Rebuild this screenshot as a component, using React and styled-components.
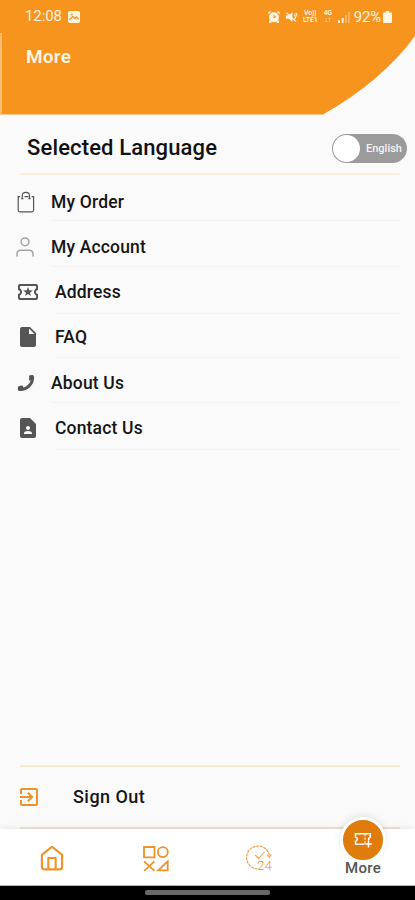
import React from 'react';
import styled, { createGlobalStyle } from 'styled-components';
import {
  MdOutlineLocalActivity,
  MdInsertDriveFile,
  MdContactPage,
  MdExitToApp,
} from 'react-icons/md';

const GlobalStyle = createGlobalStyle`
    * {
        box-sizing: border-box;
    }
    body {
        margin: 0;
        background-color: #fafafa;
        font-family: Roboto, "Liberation Sans", sans-serif;
    }
`;

const Screen = styled.div`
    width: 415px;
    height: 900px;
    display: flex;
    flex-direction: column;
    background-color: #fafafa;
    overflow: hidden;
`;

const Header = styled.header`
    position: relative;
    height: 115px;
    flex-shrink: 0;
    color: #fff5e3;
`;

const Curve = styled.svg`
    position: absolute;
    inset: 0;
`;

const StatusBar = styled.div`
    position: relative;
    display: flex;
    align-items: center;
    height: 33px;
    padding: 0 23px 0 25px;
`;

const Clock = styled.span`
    font-size: 15px;
    line-height: 33px;
    letter-spacing: -0.1px;
    margin-right: 6px;
`;

const StatusIcons = styled.div`
    display: flex;
    align-items: center;
    margin-left: auto;
`;

const Network = styled.span`
    display: flex;
    flex-direction: column;
    align-items: center;
    width: ${props => props.$width};
    margin-left: 5px;
    font-size: 7px;
    font-weight: 600;
    line-height: 7px;
    letter-spacing: -0.2px;
`;

const NetworkLine = styled.span`
    display: block;
    height: 7px;
    overflow: hidden;
`;

const Percent = styled.span`
    font-size: 15px;
    line-height: 16px;
    margin-left: 4px;
    letter-spacing: -0.2px;
`;

const PageTitle = styled.h1`
    position: relative;
    margin: 13px 0 0 26px;
    font-size: 19px;
    font-weight: 600;
    line-height: 22px;
    letter-spacing: 0.2px;
`;

const Language = styled.div`
    display: flex;
    align-items: center;
    justify-content: space-between;
    height: 58px;
    padding: 8px 8px 0 27px;
`;

const LanguageTitle = styled.h2`
    margin: 0;
    font-size: 22px;
    font-weight: 500;
    line-height: 30px;
    letter-spacing: 0.14px;
    color: #111;
`;

const Switch = styled.button`
    display: flex;
    align-items: center;
    justify-content: space-between;
    width: 75px;
    height: 29px;
    padding: 1px 5px 1px 1px;
    border: none;
    border-radius: 15px;
    background-color: #9b9b9b;
    color: #f4f4f4;
    font-family: inherit;
    font-size: 11px;
    font-weight: 500;
`;

const Knob = styled.span`
    width: 27px;
    height: 27px;
    border-radius: 50%;
    background-color: white;
`;

const Rule = styled.div`
    height: 2px;
    flex-shrink: 0;
    margin: 0 15px 0 20px;
    background-color: ${props => props.color};
`;

const Menu = styled.ul`
    margin: 0;
    padding: 0;
    list-style: none;
    flex: 1;
`;

const MenuItem = styled.li`
    display: flex;
    height: ${props => props.$height}px;
    padding: 0 15px 0 ${props => props.$left}px;
`;

const MenuIcon = styled.span`
    display: flex;
    align-items: center;
    height: 20px;
    width: ${props => props.$width}px;
    margin-top: ${props => props.$top}px;
    color: #555;
`;

const MenuLabel = styled.span`
    flex: 1;
    padding-top: ${props => props.$top}px;
    border-bottom: 1px solid #f3f3f3;
    font-size: 17.5px;
    font-weight: 500;
    line-height: 20px;
    letter-spacing: 0.17px;
    color: #161616;
`;

const SignOut = styled.div`
    display: flex;
    align-items: center;
    height: 60px;
    padding: 0 17px;
    color: #f0922a;
`;

const SignOutLabel = styled.span`
    margin: -2px 0 0 32px;
    font-size: 18px;
    font-weight: 500;
    letter-spacing: 0.45px;
    color: #161616;
`;

const Nav = styled.nav`
    display: grid;
    grid-template-columns: repeat(4, 1fr);
    height: 57px;
    flex-shrink: 0;
    background-color: white;
    border-bottom: 1px solid #b5b5b5;
    box-shadow: 0 -2px 6px rgba(0, 0, 0, 0.06);
`;

const NavItem = styled.div`
    display: flex;
    flex-direction: column;
    align-items: center;
    justify-content: ${props => (props.$active ? "flex-start" : "center")};
    padding-top: ${props => (props.$active ? "0" : "2px")};
    color: #f0922a;
`;

const NavBubble = styled.div`
    display: flex;
    align-items: center;
    justify-content: center;
    width: 46px;
    height: 46px;
    flex-shrink: 0;
    margin-top: -12px;
    border: 3px solid white;
    border-radius: 50%;
    background-color: #e07c0c;
    box-shadow: 0 -2px 7px rgba(0, 0, 0, 0.09);
    color: white;
`;

const NavLabel = styled.span`
    margin-top: -4px;
    font-size: 15px;
    font-weight: 500;
    line-height: 18px;
    letter-spacing: 0.3px;
    color: #555;
`;

const SystemBar = styled.div`
    display: flex;
    justify-content: center;
    height: 14px;
    flex-shrink: 0;
    padding-top: 4px;
    background-color: black;
`;

const HomeHandle = styled.div`
    width: 125px;
    height: 5px;
    border-radius: 2px;
    background-color: #686868;
`;

const Spaced = styled.span`
    display: flex;
    margin-left: ${props => props.$gap};
`;

const PictureIcon = () => (
    <svg width="12" height="12" viewBox="0 0 12 12">
        <rect x="0" y="0" width="12" height="12" rx="2" fill="currentColor" />
        <path d="M1.5 9 4.6 5.5 6.7 7.5 8.3 6 10.6 8.2" fill="none" stroke="#f7941d" strokeWidth="1.3" />
        <circle cx="3.8" cy="3.4" r="1" fill="#f7941d" />
    </svg>
);

const AlarmIcon = () => (
    <svg width="12" height="12" viewBox="0 0 12 12">
        <path d="M.5.5h3l-3 3zM11.5.5h-3l3 3zM1 9.5h2.5V12H1zM8.5 9.5H11V12H8.5z" fill="currentColor" />
        <circle cx="6" cy="6.3" r="5" fill="currentColor" />
        <path d="M6 3.8v2.8l2.1-1.2" fill="none" stroke="#f7941d" strokeWidth="1.1" />
    </svg>
);

const MuteIcon = () => (
    <svg width="13" height="12" viewBox="0 0 14 12">
        <path d="M1 4h3l4-3v10L4 8H1z" fill="currentColor" />
        <path d="M1.5 1.5 12 11M10 3.3c1.5 1.2 1.5 3.5.3 5M11.5 1.5c1 .9 1.3 2 1.3 4" fill="none" stroke="currentColor" strokeWidth="1.3" />
    </svg>
);

const SignalIcon = () => (
    <svg width="12" height="12" viewBox="0 0 12 12">
        <path d="M0 9.5h2V12H0zM3.6 7h2v5h-2z" fill="currentColor" />
        <path d="M7 4h1.8v8H7zM10 1h1.8v11H10z" fill="currentColor" opacity=".35" />
    </svg>
);

const BatteryIcon = () => (
    <svg width="9" height="12" viewBox="0 0 8 12" preserveAspectRatio="none">
        <path d="M2.5 0h3v1.5H7q1 0 1 1V11q0 1-1 1H1q-1 0-1-1V2.5q0-1 1-1h1.5z" fill="currentColor" />
    </svg>
);

const BagIcon = () => (
    <svg width="18" height="22" viewBox="0 0 18 22" fill="none" stroke="currentColor" strokeWidth="1.2">
        <path d="M3.2 5.7H1.2V19q0 1.8 1.8 1.8h11.8q1.8 0 1.8-1.8V5.7h-2M7.5 5.7h4" />
        <path d="M5.3 8V4.6c0-4.4 7.2-4.4 7.2 0V8M4.2 7.6h2.2M11.4 7.6h2.2" />
    </svg>
);

const PersonIcon = () => (
    <svg width="18" height="20" viewBox="0 0 18 20" fill="none" stroke="#a3a3a3" strokeWidth="1.5">
        <circle cx="9" cy="4.8" r="3.9" />
        <path d="M1 19.5v-2.3c0-2.3 1.5-3.9 3.8-3.9h8.4c2.3 0 3.8 1.6 3.8 3.9v2.3" />
    </svg>
);

const PhoneIcon = () => (
    <svg width="18" height="18" viewBox="0 0 18 18" fill="none" stroke="currentColor" strokeLinecap="round" strokeLinejoin="round">
        <path d="M15.6 3.2C15.6 10 10.2 15.4 3.2 15.6" strokeWidth="3" />
        <path d="m13.2 2.4 2.3-.4.1 3-2.4.5zM2 13.4l2.8-.9 1 2-2.3 1.4-1.5-.2z" fill="currentColor" strokeWidth="2.2" />
    </svg>
);

const HomeIcon = () => (
    <svg width="24" height="26" viewBox="0 0 24 27" fill="none" stroke="currentColor" strokeWidth="2.2" strokeLinejoin="round">
        <path d="M1.5 10.2 12 1.8l10.5 8.4v12.3q0 2.8-2.8 2.8H4.3q-2.8 0-2.8-2.8z" />
        <path d="M8.2 25V13.5h7.6V25" />
    </svg>
);

const ShapesIcon = () => (
    <svg width="26" height="27" viewBox="0 0 26 27" fill="none" stroke="currentColor" strokeWidth="1.8">
        <path d="M1 2h10.5v10.3H1zM1.2 16.3l10.2 9.5M11.4 16.3 1.2 25.8M15.3 25.4h9.4v-9z" />
        <circle cx="19.8" cy="7.1" r="5" />
    </svg>
);

const AllDayText = styled.text`
    font-size: 13.5px;
    font-weight: 300;
    fill: #f0922a;
`;

const AllDayIcon = () => (
    <svg width="28" height="28" viewBox="0 0 28 28" fill="none" stroke="#f3a04a">
        <path d="M12.5 25A11.5 11.5 0 1 1 24.5 12" strokeWidth="1.2" strokeDasharray="3 .7" />
        <path d="m22 11 2.5 2.2 1.8-2.8M10 11l3.8 3.5 5.5-6.5" strokeWidth="1.1" />
        <AllDayText x="12" y="26" stroke="none" textLength="15">24</AllDayText>
    </svg>
);

const TicketPlusIcon = () => (
    <svg width="18" height="16" viewBox="0 0 18 16" fill="none" stroke="currentColor" strokeWidth="1.5">
        <path d="M10.5 12.2H1.5V9.4c2.3-.8 2.3-3.6 0-4.4V1.8h14.8V5c-1.6.6-2 2-1.3 3.3" />
        <path d="M11 2v2.3M11 5.6v2.6M11 9.5v2.4" strokeWidth="1" />
        <path d="M14.5 8.5v7M11.2 12h6.6" />
    </svg>
);

const items = [
    { label: "My Order", icon: <BagIcon />, height: 46, left: 17, width: 34, top: 17 },
    { label: "My Account", icon: <PersonIcon />, height: 46, left: 16, width: 35, top: 16 },
    { label: "Address", icon: <MdOutlineLocalActivity size={24} />, height: 47, left: 16, width: 39, top: 15 },
    { label: "FAQ", icon: <MdInsertDriveFile size={24} />, height: 44, left: 16, width: 39, top: 13 },
    { label: "About Us", icon: <PhoneIcon />, height: 45, left: 17, width: 34, top: 15 },
    { label: "Contact Us", icon: <MdContactPage size={24} />, height: 47, left: 16, width: 39, top: 15 },
];

const App = () => {
  return (
    <Screen>
        <GlobalStyle />
        <Header>
            <Curve width="415" height="115" viewBox="0 0 415 115">
                <path d="M0 0H415V36Q382 81 323 114.5H0z" fill="#f7941d" />
                <path d="M0 33h2v82H0z" fill="#fbbd73" />
            </Curve>
            <StatusBar>
                <Clock>12:08</Clock>
                <PictureIcon />
                <StatusIcons>
                    <AlarmIcon />
                    <Spaced $gap="5px"><MuteIcon /></Spaced>
                    <Network $width="15px">
                        <NetworkLine>Vo))</NetworkLine>
                        <NetworkLine>LTE1</NetworkLine>
                    </Network>
                    <Network $width="10px">
                        <NetworkLine>4G</NetworkLine>
                        <NetworkLine>↓↑</NetworkLine>
                    </Network>
                    <Spaced $gap="5px"><SignalIcon /></Spaced>
                    <Percent>92%</Percent>
                    <Spaced $gap="2px"><BatteryIcon /></Spaced>
                </StatusIcons>
            </StatusBar>
            <PageTitle>More</PageTitle>
        </Header>
        <Language>
            <LanguageTitle>Selected Language</LanguageTitle>
            <Switch>
                <Knob />
                English
            </Switch>
        </Language>
        <Rule color="#fbeedb" />
        <Menu>
            {items.map(item => (
                <MenuItem key={item.label} $height={item.height} $left={item.left}>
                    <MenuIcon $width={item.width} $top={item.top}>{item.icon}</MenuIcon>
                    <MenuLabel $top={item.top}>{item.label}</MenuLabel>
                </MenuItem>
            ))}
        </Menu>
        <Rule color="#fbe8cd" />
        <SignOut>
            <MdExitToApp size={24} />
            <SignOutLabel>Sign Out</SignOutLabel>
        </SignOut>
        <Rule color="#ece6d3" />
        <Nav>
            <NavItem><HomeIcon /></NavItem>
            <NavItem><ShapesIcon /></NavItem>
            <NavItem><AllDayIcon /></NavItem>
            <NavItem $active>
                <NavBubble><TicketPlusIcon /></NavBubble>
                <NavLabel>More</NavLabel>
            </NavItem>
        </Nav>
        <SystemBar>
            <HomeHandle />
        </SystemBar>
    </Screen>
  )
}

export default App;
